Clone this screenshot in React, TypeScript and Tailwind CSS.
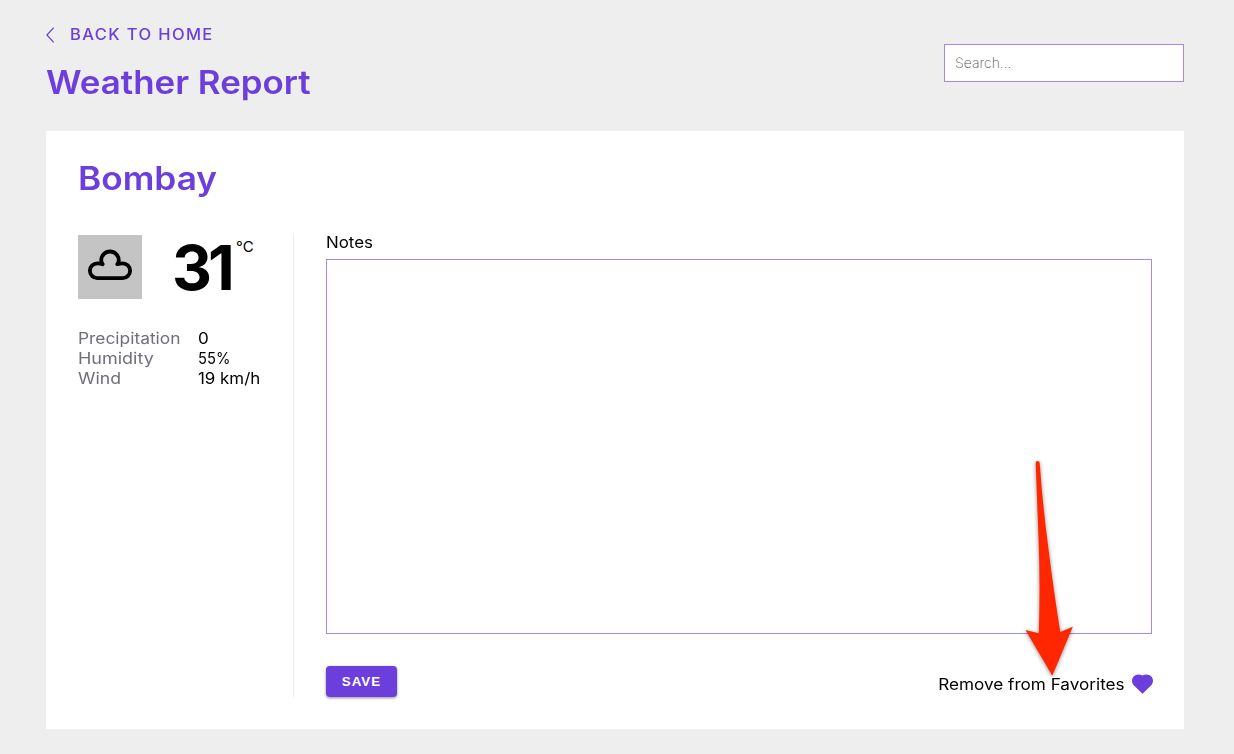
import React from "react";

const stats = [
  { label: "Precipitation", value: "0", l: "scale-x-[1.12]", v: "scale-x-[1.1]" },
  { label: "Humidity", value: "55%", l: "scale-x-[1.16]", v: "scale-x-[0.95]" },
  { label: "Wind", value: "19 km/h", l: "scale-x-[1.14]", v: "scale-x-[1.09]" },
];

export default function App() {
  return (
    <div className="relative h-[754px] w-[1234px] overflow-hidden bg-[#eeeeee] pl-[46px] pr-[50px] font-['Inter','Liberation_Sans',sans-serif] text-black">
      <header className="flex h-[131px] justify-between">
        <div className="pt-6">
          <a className="flex h-5 items-center whitespace-nowrap text-[15.5px] font-medium leading-5 tracking-[1.3px] text-[#6c3edc]">
            <svg className="mr-4 mt-0.5 h-4 w-2 shrink-0" viewBox="0 0 8 16" fill="none" stroke="currentColor" strokeWidth="1.2">
              <path d="M7.7 0.6 L0.9 8 L7.7 15.4" />
            </svg>
            <span className="mt-px inline-block origin-left scale-x-[1.065]">BACK TO HOME</span>
          </a>
          <h1 className="mt-[19px] w-max origin-left scale-x-[1.09] whitespace-nowrap text-[32px] font-semibold leading-10 text-[#6c3edc]">Weather Report</h1>
        </div>
        <input
          type="text"
          placeholder="Search..."
          className="mt-11 h-[38px] w-60 border border-[#a588ea] bg-white px-2.5 pb-0.5 text-[14px] font-extralight outline-none placeholder:text-[#505058]"
        />
      </header>
      <main className="h-[598px] bg-white px-8 pt-7">
        <h2 className="w-max origin-left scale-x-[1.1] text-[32px] font-semibold leading-10 text-[#6c3edc]">Bombay</h2>
        <div className="mt-9 flex h-[462px]">
          <section className="w-[216px] border-r border-[#ededed]">
            <div className="flex">
              <div className="h-16 w-16 bg-[#c4c4c4]">
                <svg className="h-16 w-16" viewBox="0 0 64 64" fill="none" stroke="#000" strokeWidth="3.8" strokeLinecap="round" strokeLinejoin="round">
                  <path d="M24.7 29.2 C23.8 28 23.2 26.6 23.2 25.3 A8.8 8.8 0 0 1 40.8 25.3 C40.8 26.6 40.2 28 39.3 29.2 C40.9 28.6 42.3 28.3 44.6 28.3 A7.4 7.4 0 0 1 44.8 43.1 H19.2 A7.4 7.4 0 0 1 19.4 28.3 C21.7 28.3 23.1 28.6 24.7 29.2 Z" />
                </svg>
              </div>
              <div className="ml-[30px] flex h-16">
                <span className="w-[63px] origin-left scale-x-[1.0] whitespace-nowrap text-[62px] font-bold leading-[66px] tracking-[-4px]">31</span>
                <span className="ml-px mt-0.5 whitespace-nowrap text-[15px] leading-5">°C</span>
              </div>
            </div>
            <dl className="mt-[30px] text-[15.5px] leading-5">
              {stats.map((s) => (
                <div key={s.label} className="flex whitespace-nowrap">
                  <dt className="w-[120px] shrink-0 text-[#6f6f78]">
                    <span className={"inline-block origin-left " + s.l}>{s.label}</span>
                  </dt>
                  <dd className={"origin-left " + s.v}>{s.value}</dd>
                </div>
              ))}
            </dl>
          </section>
          <section className="flex w-[858px] flex-col pl-8">
            <label className="h-6 w-max shrink-0 origin-left scale-x-[1.09] text-[15.5px] leading-[15px]">Notes</label>
            <textarea className="h-[375px] w-[826px] shrink-0 resize-none border border-[#a588ea] outline-none" />
            <div className="mt-8 flex h-9 shrink-0 justify-between">
              <button className="h-[31px] w-[71px] rounded-[4px] bg-[#6c3edc] font-['Liberation_Sans',sans-serif] text-[13.33px] font-bold tracking-[1px] text-white shadow-[0_1px_3px_rgba(0,0,0,0.45)]">SAVE</button>
              <div className="mr-[-1px] flex h-9 items-center whitespace-nowrap text-[15.5px]">
                <span className="origin-right scale-x-[1.105] pt-0.5">Remove from Favorites</span>
                <svg className="ml-[7px] h-5 w-[21px]" viewBox="0 0 21 20" fill="#6c3edc">
                  <path d="M10.5 19.7 L1.7 11.2 C-0.5 9 -0.5 4.8 1.6 2.6 C3.9 0.1 7.6 -0.1 10.5 1.6 C13.4 -0.1 17.1 0.1 19.4 2.6 C21.5 4.8 21.5 9 19.3 11.2 Z" />
                </svg>
              </div>
            </div>
          </section>
        </div>
      </main>
      <svg className="pointer-events-none absolute left-[1015px] top-[451px] h-[240px] w-[70px] drop-shadow-[0_1px_2px_rgba(0,0,0,0.45)]" viewBox="1015 451 70 240" fill="#ff2600">
        <path d="M1035.7 463 Q1035.8 461 1037.6 461 Q1039.5 461 1039.7 463 Q1042.5 505 1049 553 Q1053.5 590 1060.3 632 L1072.8 626.7 L1052.3 675.8 L1025.5 630 L1038.8 633.2 Q1040.4 585 1038.6 540 Z" />
      </svg>
    </div>
  );
}
